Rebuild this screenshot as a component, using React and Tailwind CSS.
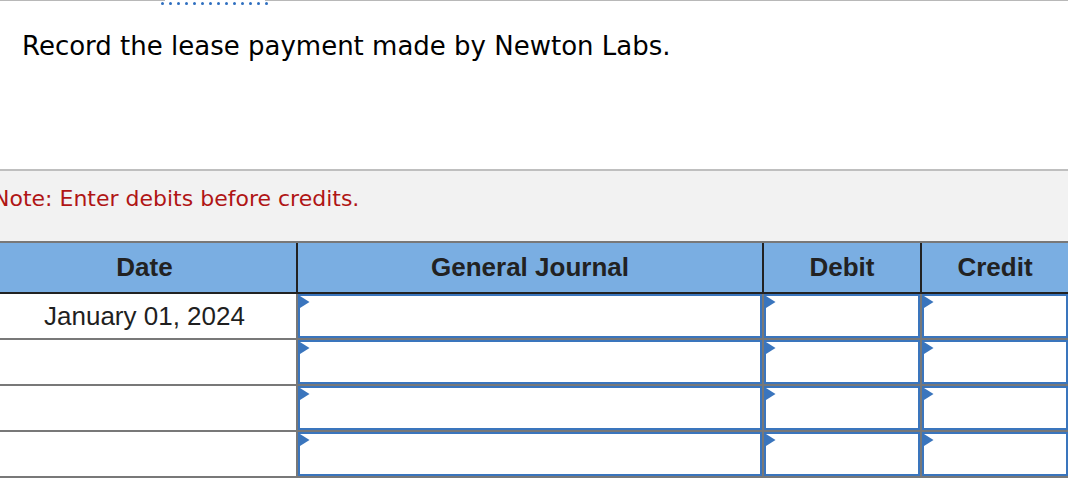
import React from "react";

const Tri = () => (
  <svg width="10" height="12" viewBox="0 0 10 12" className="absolute left-0 top-0">
    <polygon points="0,0 9.5,6 0,12" fill="#3a75bd" />
  </svg>
);

const Box = () => (
  <div className="relative h-full w-full border-2 border-[#3a75bd] bg-white">
    <Tri />
  </div>
);

const Row = ({ date }) => (
  <div className="flex h-[46px] border-b-2 border-[#787878]">
    <div className="flex w-[296px] shrink-0 items-center justify-center pr-[7px] text-[26px] text-[#1f1f1f]">
      {date}
    </div>
    <div className="h-full w-[466px] shrink-0 border-l-2 border-[#787878]">
      <Box />
    </div>
    <div className="h-full w-[158px] shrink-0 border-l-2 border-[#787878]">
      <Box />
    </div>
    <div className="h-full flex-1 border-l-2 border-[#787878]">
      <Box />
    </div>
  </div>
);

export default function App() {
  const dots = Array.from({ length: 14 });
  return (
    <div className="h-[478px] w-[1068px] overflow-hidden bg-white font-['Liberation_Sans',Arial,sans-serif]">
      <div className="flex h-px">
        <div className="h-px w-[165px] bg-[#b8b8b8]" />
        <div className="h-px w-[100px]" />
        <div className="h-px flex-1 bg-[#b8b8b8]" />
      </div>
      <div className="ml-[161px] mt-px flex h-[3px] gap-[5px]">
        {dots.map((_, i) => (
          <div key={i} className="h-[3px] w-[3px] rounded-full bg-[#2f6fc0]" />
        ))}
      </div>
      <p className="ml-[22px] mt-[26px] font-['DejaVu_Sans',Verdana,sans-serif] text-[26px] leading-[30px] text-black">
        Record the lease payment made by Newton Labs.
      </p>
      <div className="mt-[108px] h-[72px] border-t-2 border-[#bfbfbf] bg-[#f2f2f2] pt-[15px]">
        <p className="ml-[-7px] font-['DejaVu_Sans',Verdana,sans-serif] text-[22px] leading-[26px] text-[#b01515]">
          Note: Enter debits before credits.
        </p>
      </div>
      <div className="border-t-2 border-[#787878]">
        <div className="flex h-[51px] border-b-2 border-[#222] bg-[#7aaee2] text-[26px] font-bold text-[#222]">
          <div className="flex w-[296px] shrink-0 items-center justify-center pr-[7px]">Date</div>
          <div className="flex w-[466px] shrink-0 items-center justify-center border-l-2 border-[#222]">
            General Journal
          </div>
          <div className="flex w-[158px] shrink-0 items-center justify-center border-l-2 border-[#222]">
            Debit
          </div>
          <div className="flex flex-1 items-center justify-center border-l-2 border-[#222]">Credit</div>
        </div>
        <Row date="January 01, 2024" />
        <Row date="" />
        <Row date="" />
        <Row date="" />
      </div>
    </div>
  );
}
